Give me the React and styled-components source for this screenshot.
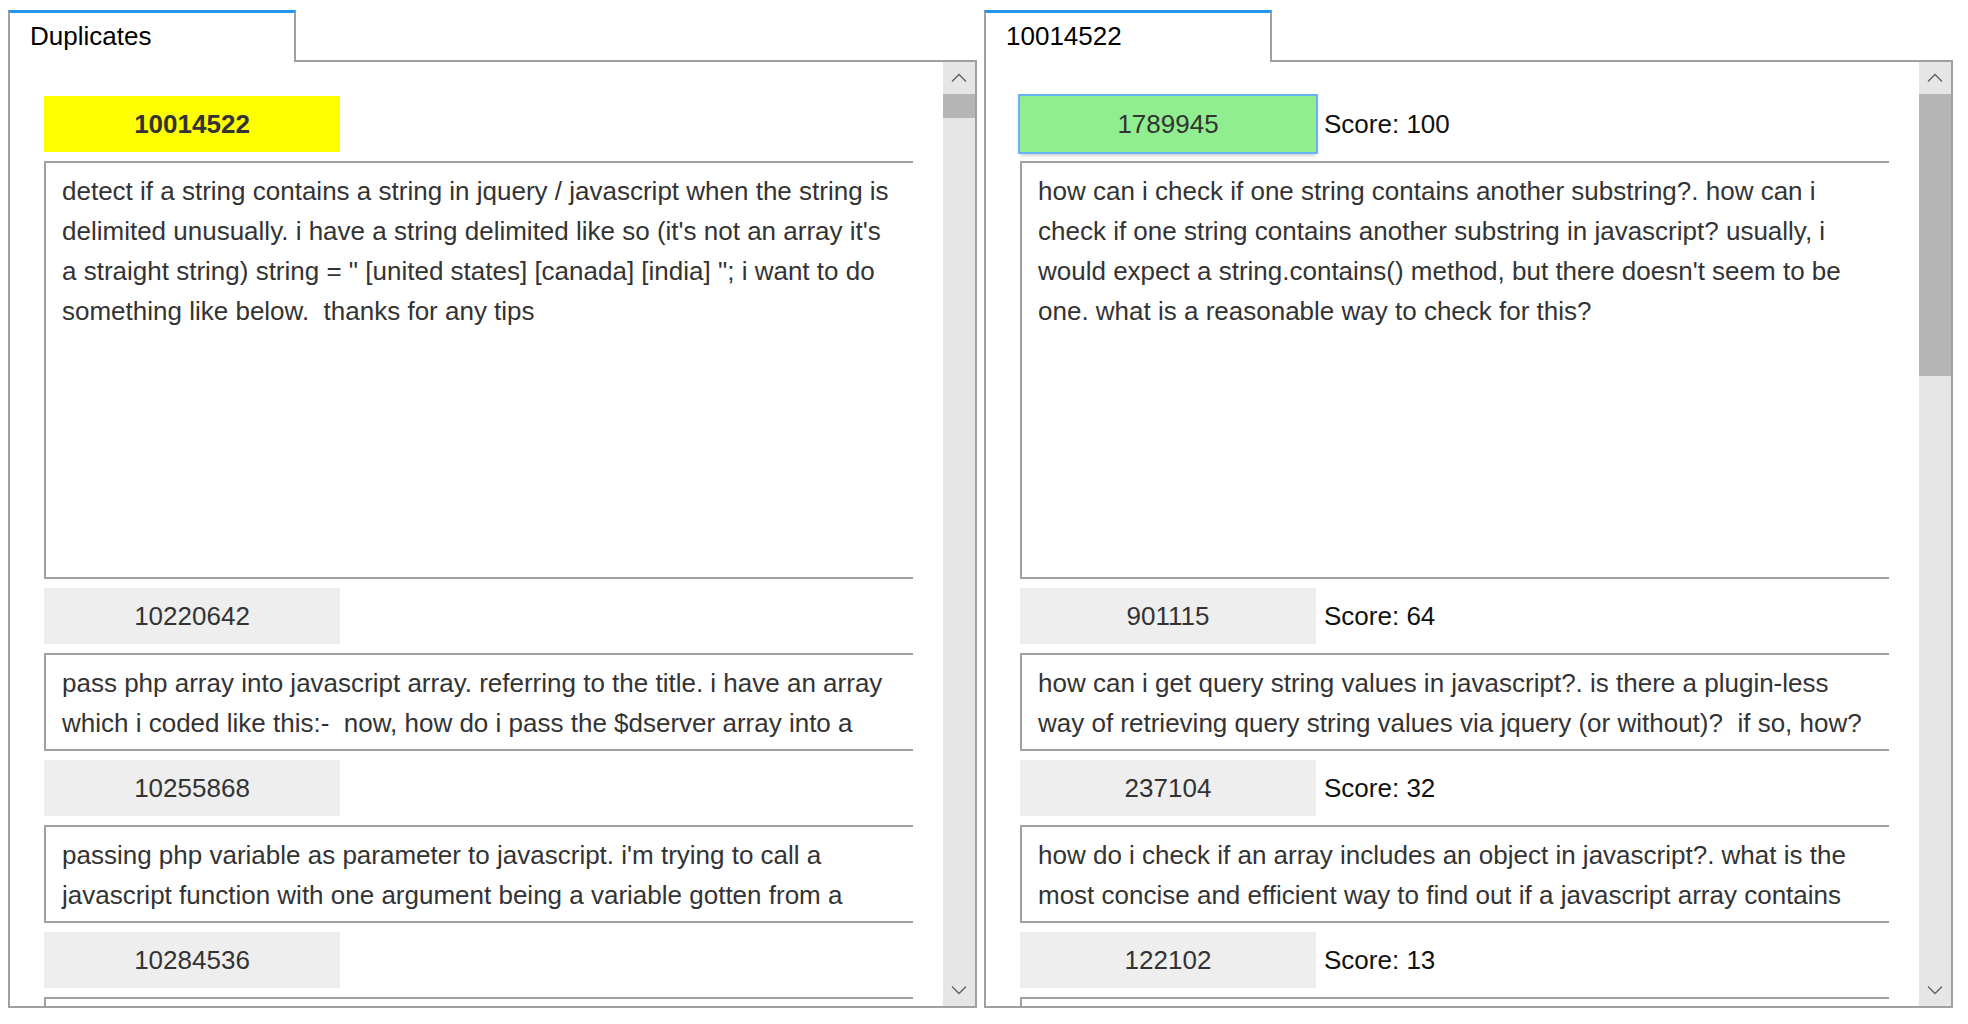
import React from "react";
import styled, { createGlobalStyle } from "styled-components";

const GlobalStyle = createGlobalStyle`
    body {
        margin:0;
        background:#fff;
        font-family:"Liberation Sans", Arial, sans-serif;
    }
`;

const Page = styled.div`
    display:flex;
    gap:7px;
    width:1953px;
    height:1008px;
    padding:10px 0 0 8px;
    box-sizing:border-box;
`;

const Panel = styled.div`
    flex:1;
    display:flex;
    flex-direction:column;
    min-width:0;
`;

const TabRow = styled.div`
    display:flex;
    height:52px;
    flex-shrink:0;
`;

const Tab = styled.div`
    width:288px;
    box-sizing:border-box;
    border-top:3px solid #2196f3;
    border-left:2px solid #a0a0a0;
    border-right:2px solid #a0a0a0;
    padding:0 0 2px 20px;
    display:flex;
    align-items:center;
    font-size:26px;
    color:#000;
    background:#fff;
`;

const TabFill = styled.div`
    flex:1;
    border-bottom:2px solid #a0a0a0;
`;

const Body = styled.div`
    flex:1;
    display:flex;
    min-height:0;
    border:2px solid #a0a0a0;
    border-top:none;
`;

const List = styled.div`
    flex:1;
    min-width:0;
    overflow:hidden;
    display:flex;
    flex-direction:column;
    gap:9px;
    padding:34px 30px 0 34px;
`;

const HeaderRow = styled.div`
    display:flex;
    align-items:center;
    flex-shrink:0;
`;

const backgrounds = { yellow:"#ffff00", green:"#90ee90", gray:"#eeeeee" };

const IdBox = styled.div`
    width:296px;
    height:56px;
    display:flex;
    align-items:center;
    justify-content:center;
    font-size:26px;
    color:#333;
    font-weight:${p => p.$kind === "yellow" ? "bold" : "normal"};
    background:${p => backgrounds[p.$kind]};
    box-shadow:${p => p.$kind === "green" ? "0 0 0 2px #66b3f7, 0 3px 4px rgba(0,0,0,0.25)" : "none"};
`;

const Score = styled.span`
    margin-left:8px;
    font-size:26px;
    color:#111;
`;

const TextBox = styled.div`
    flex-shrink:0;
    height:${p => p.$tall ? "418px" : "98px"};
    box-sizing:border-box;
    border:2px solid #a0a0a0;
    border-right:none;
    padding:8px ${p => p.$padRight}px 8px 16px;
    overflow:hidden;
    font-size:26px;
    line-height:40px;
    color:#333;
    white-space:pre-wrap;
`;

const Scrollbar = styled.div`
    width:32px;
    flex-shrink:0;
    display:flex;
    flex-direction:column;
    background:#e6e6e6;
`;

const ArrowBtn = styled.div`
    height:32px;
    flex-shrink:0;
    display:flex;
    align-items:center;
    justify-content:center;
`;

const Thumb = styled.div`
    background:#b5b5b5;
    flex-shrink:0;
`;

const Track = styled.div`
    flex:1;
`;

const Caret = ({ down }) => (
    <svg width="16" height="10" viewBox="0 0 16 10">
        <polyline
            points={down ? "1,1.5 8,8.5 15,1.5" : "1,8.5 8,1.5 15,8.5"}
            fill="none" stroke="#606060" strokeWidth="1.3" />
    </svg>
);

const ScrollBar = ({ thumb }) => (
    <Scrollbar>
        <ArrowBtn><Caret /></ArrowBtn>
        <Thumb style={{ height: thumb }} />
        <Track />
        <ArrowBtn><Caret down /></ArrowBtn>
    </Scrollbar>
);

const duplicates = [
    { id:"10014522", kind:"yellow", tall:true,
      text:"detect if a string contains a string in jquery / javascript when the string is delimited unusually. i have a string delimited like so (it's not an array it's a straight string) string = \" [united states] [canada] [india] \"; i want to do something like below.  thanks for any tips" },
    { id:"10220642", kind:"gray",
      text:"pass php array into javascript array. referring to the title. i have an array which i coded like this:-  now, how do i pass the $dserver array into a javascript array?" },
    { id:"10255868", kind:"gray",
      text:"passing php variable as parameter to javascript. i'm trying to call a javascript function with one argument being a variable gotten from a php script." },
    { id:"10284536", kind:"gray",
      text:"get value of php variable in javascript. how can i read a php variable from my javascript code?" },
];

const matches = [
    { id:"1789945", kind:"green", score:100, tall:true,
      text:"how can i check if one string contains another substring?. how can i check if one string contains another substring in javascript? usually, i would expect a string.contains() method, but there doesn't seem to be one. what is a reasonable way to check for this?" },
    { id:"901115", kind:"gray", score:64,
      text:"how can i get query string values in javascript?. is there a plugin-less way of retrieving query string values via jquery (or without)?  if so, how? if not, is there a plugin which can do so?" },
    { id:"237104", kind:"gray", score:32,
      text:"how do i check if an array includes an object in javascript?. what is the most concise and efficient way to find out if a javascript array contains a value?" },
    { id:"122102", kind:"gray", score:13,
      text:"what is the most efficient way to deep clone an object in javascript?. what is the most efficient way to clone a javascript object?" },
];

const Entry = ({ item, padRight }) => (
    <>
        <HeaderRow>
            <IdBox $kind={item.kind}>{item.id}</IdBox>
            {item.score !== undefined && <Score>Score: {item.score}</Score>}
        </HeaderRow>
        <TextBox $tall={item.tall} $padRight={padRight}>{item.text}</TextBox>
    </>
);

const Pane = ({ title, items, thumb, padRight }) => (
    <Panel>
        <TabRow>
            <Tab>{title}</Tab>
            <TabFill />
        </TabRow>
        <Body>
            <List>
                {items.map(item => <Entry key={item.id} item={item} padRight={padRight} />)}
            </List>
            <ScrollBar thumb={thumb} />
        </Body>
    </Panel>
);

const App = () => (
    <>
        <GlobalStyle />
        <Page>
            <Pane title="Duplicates" items={duplicates} thumb={24} padRight={21} />
            <Pane title="10014522" items={matches} thumb={282} padRight={26.5} />
        </Page>
    </>
);

export default App;
